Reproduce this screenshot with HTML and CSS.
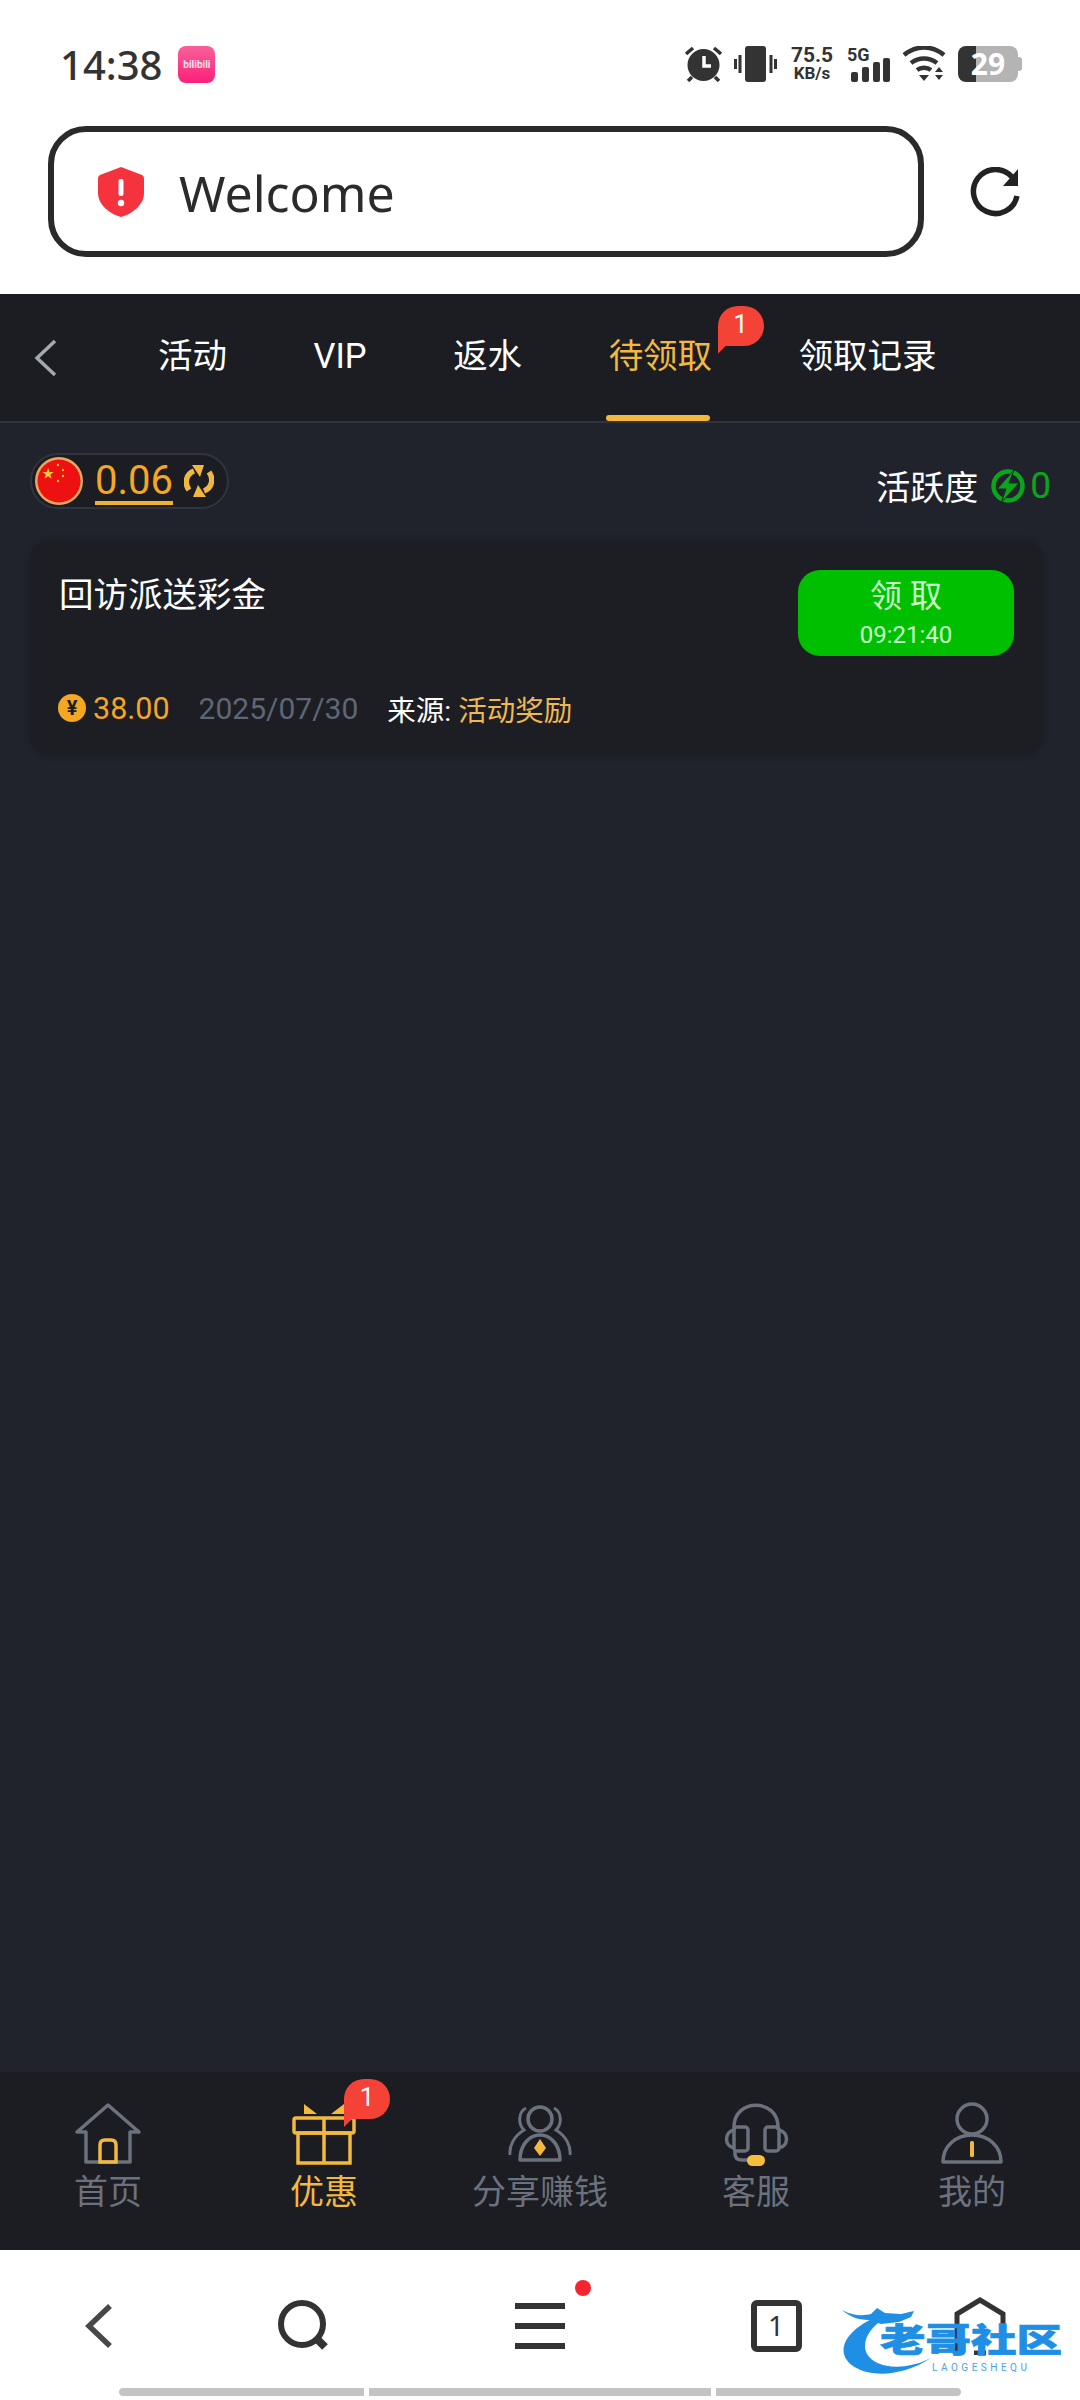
FILE: index.html
```html
<!DOCTYPE html>
<html lang="zh-CN">
<head>
  <meta charset="UTF-8" />
  <meta name="viewport" content="width=device-width, initial-scale=1.0" />
  <title>待领取</title>
  <link rel="stylesheet" href="styles.css">
</head>
<body>
  <div id="tela">

    <div class="status">
      <span class="hora">14:38</span>
      <div class="app-icone"><span>bilibili</span></div>
      <div class="status-dir">
        <svg class="ic-alarme" viewBox="0 0 37 36">
          <circle cx="18.500" cy="19" r="16" fill="#333"/>
          <path d="M19 10v10h7" fill="none" stroke="#fff" stroke-width="3.500"/>
          <path d="M1 8l7-6M36 8l-7-6M7 31l-4 4M30 31l4 4" stroke="#333" stroke-width="3.500" fill="none"/>
        </svg>
        <svg class="ic-vibra" viewBox="0 0 43 36">
          <rect x="11" y="0" width="21" height="36" rx="3" fill="#333"/>
          <path d="M6 9v18M1.500 13v10M37 9v18M41.500 13v10" stroke="#333" stroke-width="3"/>
        </svg>
        <div class="rede"><b>75.5</b><span>KB/s</span></div>
        <div class="sinal">
          <b>5G</b>
          <svg viewBox="0 0 41 24">
            <rect x="2" y="14" width="7" height="10" rx="2" fill="#333"/>
            <rect x="13" y="9" width="7" height="15" rx="2" fill="#333"/>
            <rect x="24" y="4" width="7" height="20" rx="2" fill="#333"/>
            <rect x="34" y="0" width="7" height="24" rx="2" fill="#333"/>
          </svg>
        </div>
        <svg class="ic-wifi" viewBox="0 0 44 36">
          <path d="M2 9C14-1 30-1 42 9M9 17c8-6 18-6 26 0" fill="none" stroke="#333" stroke-width="4.500"/>
          <path d="M15 24c4-3 10-3 14 0" fill="none" stroke="#333" stroke-width="4.500"/>
          <path d="M17 29h10l-5 6zM33 26l4-5 4 5zM33 29h8l-4 5z" fill="#333"/>
        </svg>
        <div class="bateria"><span>29</span></div>
      </div>
    </div>

    <div class="endereco">
      <div class="barra-url">
        <svg class="ic-escudo" viewBox="0 0 46 50">
          <path d="M23 0L44 8Q46 9 46 11V26C46 38 34 47 23 50C12 47 0 38 0 26V11Q0 9 2 8Z" fill="#f4333f"/>
          <rect x="20.500" y="12" width="5" height="17" rx="2" fill="#fff"/>
          <circle cx="23" cy="36" r="3.200" fill="#fff"/>
        </svg>
        <span class="url-texto">Welcome</span>
      </div>
      <svg class="ic-recarregar" viewBox="0 0 50 50">
        <path d="M47 29A22 22 0 1 1 42 10" fill="none" stroke="#222" stroke-width="5.500"/>
        <path d="M48 2V19H33Z" fill="#222"/>
      </svg>
    </div>

    <div class="nav">
      <svg class="ic-voltar" viewBox="0 0 24 38">
        <path d="M21 2L3 19L21 36" fill="none" stroke="#a4a8b0" stroke-width="3.500"/>
      </svg>
      <div class="abas">
        <span class="aba">活动</span>
        <span class="aba">VIP</span>
        <span class="aba">返水</span>
        <span class="aba ativa">待领取<i class="badge badge-aba">1</i></span>
        <span class="aba">领取记录</span>
      </div>
    </div>

    <div class="conteudo">
      <div class="linha-topo">
        <div class="saldo">
          <svg class="ic-bandeira" viewBox="0 0 50 50">
            <circle cx="25" cy="25" r="24" fill="#e8a860"/>
            <circle cx="25" cy="25" r="21.500" fill="#ee1111"/>
            <path d="M14 9l2.200 6.200 6.500.2-5.200 4 1.900 6.300-5.400-3.700-5.400 3.700 1.900-6.300-5.200-4 6.500-.2z" fill="#ffc93a" transform="translate(5 6) scale(.65)"/>
            <circle cx="24" cy="9" r="1.200" fill="#ffc93a"/>
            <circle cx="29" cy="14" r="1.200" fill="#ffc93a"/>
            <circle cx="29" cy="20" r="1.200" fill="#ffc93a"/>
            <circle cx="24" cy="25" r="1.200" fill="#ffc93a"/>
          </svg>
          <span class="saldo-valor">0.06</span>
          <svg class="ic-troca" viewBox="0 0 30 32">
            <path d="M5 25C0 18 2 9 10 6" fill="none" stroke="#f0b840" stroke-width="5.500"/>
            <path d="M8 0h12l-4 12z" fill="#f0b840"/>
            <path d="M25 7c5 7 3 16-5 19" fill="none" stroke="#f0b840" stroke-width="5.500"/>
            <path d="M22 32H9l5-12z" fill="#f0b840"/>
          </svg>
        </div>
        <div class="atividade">
          <span>活跃度</span>
          <svg class="ic-raio" viewBox="0 0 34 34">
            <circle cx="17" cy="17" r="14.500" fill="none" stroke="#0aa61a" stroke-width="4.500"/>
            <path d="M23 1L6 20h9l-5 14 18-20h-10z" fill="#0aa61a" stroke="#20232c" stroke-width="1"/>
          </svg>
          <b>0</b>
        </div>
      </div>

      <div class="cartao">
        <div class="cartao-topo">
          <span class="cartao-titulo">回访派送彩金</span>
          <button class="btn-receber">
            <span class="btn-texto">领 取</span>
            <span class="btn-tempo">09:21:40</span>
          </button>
        </div>
        <div class="cartao-info">
          <span class="moeda">¥</span>
          <span class="valor">38.00</span>
          <span class="data">2025/07/30</span>
          <span class="origem">来源: <em>活动奖励</em></span>
        </div>
      </div>
    </div>

    <div class="menu">
      <div class="menu-item">
        <svg viewBox="0 0 68 64">
          <path d="M12 30H3L34 3L65 30H56V60H12Z" fill="none" stroke="#6b717d" stroke-width="3.500" stroke-linejoin="round"/>
          <path d="M26 60V43Q26 38 31 38H37Q42 38 42 43V60Z" fill="none" stroke="#f3b93f" stroke-width="3.500"/>
        </svg>
        <span>首页</span>
      </div>
      <div class="menu-item ativo">
        <svg viewBox="0 0 68 64">
          <rect x="4" y="16" width="60" height="15" rx="2" fill="none" stroke="#f3b93f" stroke-width="3.500"/>
          <rect x="8" y="31" width="52" height="30" fill="none" stroke="#f3b93f" stroke-width="3.500"/>
          <path d="M34 16V61" stroke="#f3b93f" stroke-width="3.500"/>
          <path d="M14 2L27 12H14ZM54 2L41 12H54Z" fill="#f3b93f"/>
        </svg>
        <i class="badge badge-menu">1</i>
        <span>优惠</span>
      </div>
      <div class="menu-item">
        <svg viewBox="0 0 68 64">
          <circle cx="34" cy="17" r="12" fill="none" stroke="#6b717d" stroke-width="3.500"/>
          <path d="M14 58C14 42 24 33 34 33C44 33 54 42 54 58Z" fill="none" stroke="#6b717d" stroke-width="3.500" stroke-linejoin="round"/>
          <path d="M20 6C12 10 12 22 18 28C8 34 3 44 4 53M48 6C56 10 56 22 50 28C60 34 65 44 64 53" fill="none" stroke="#6b717d" stroke-width="3"/>
          <path d="M34 37l6 9-6 8-6-8z" fill="#f3b93f"/>
        </svg>
        <span>分享赚钱</span>
      </div>
      <div class="menu-item">
        <svg viewBox="0 0 68 64">
          <path d="M12 28V25C12 -4 56 -4 56 25V28" fill="none" stroke="#6b717d" stroke-width="3.500"/>
          <rect x="12" y="25" width="14" height="24" rx="3" fill="none" stroke="#6b717d" stroke-width="3.500"/>
          <rect x="43" y="25" width="14" height="24" rx="3" fill="none" stroke="#6b717d" stroke-width="3.500"/>
          <path d="M12 28C2 30 2 44 12 46M57 28C67 30 67 44 57 46M13 49V52Q13 58 20 58H26" fill="none" stroke="#6b717d" stroke-width="3.500"/>
          <rect x="25" y="53" width="18" height="11" rx="5.500" fill="#f7bd3c"/>
        </svg>
        <span>客服</span>
      </div>
      <div class="menu-item">
        <svg viewBox="0 0 68 64">
          <circle cx="34" cy="17" r="15" fill="none" stroke="#6b717d" stroke-width="3.500"/>
          <path d="M5 60C5 44 18 33 34 33C50 33 63 44 63 60Z" fill="none" stroke="#6b717d" stroke-width="3.500" stroke-linejoin="round"/>
          <rect x="32" y="39" width="4" height="16" rx="1.500" fill="#f3b93f"/>
        </svg>
        <span>我的</span>
      </div>
    </div>

    <div class="navegador">
      <div class="nav-icones">
        <svg class="ic-nav-voltar" viewBox="0 0 32 46">
          <path d="M26 3L5 23L26 43" fill="none" stroke="#484848" stroke-width="5.500"/>
        </svg>
        <svg class="ic-nav-busca" viewBox="0 0 52 52">
          <circle cx="24" cy="24" r="21" fill="none" stroke="#333" stroke-width="6"/>
          <path d="M38 38L47 47" stroke="#333" stroke-width="8"/>
        </svg>
        <div class="nav-menu">
          <svg viewBox="0 0 50 46">
            <path d="M0 3H50M0 23H50M0 43H50" stroke="#333" stroke-width="6"/>
          </svg>
          <i class="ponto"></i>
        </div>
        <div class="nav-abas">1</div>
        <svg class="ic-nav-casa" viewBox="0 0 52 58">
          <path d="M3 56V17L26 3L49 17V56" fill="none" stroke="#333" stroke-width="5"/>
          <path d="M20 56H32" stroke="#333" stroke-width="5"/>
        </svg>
      </div>
      <div class="gestos">
        <span class="gesto g-lado"></span>
        <span class="gesto g-meio"></span>
        <span class="gesto g-lado"></span>
      </div>
      <div class="marca">
        <svg viewBox="0 0 100 80">
          <path d="M38 14C12 24 0 40 3 52C8 72 50 82 90 56C62 70 34 66 26 52C20 40 28 26 44 16Z" fill="#1f8fe6"/>
          <path d="M1 8C12 14 22 14 30 12L36 6L44 11L60 12L73 9L70 15L58 20L40 22L28 18C16 18 8 14 1 8Z" fill="#1f8fe6"/>
        </svg>
        <span class="marca-nome">老哥社区</span>
        <span class="marca-sub">LAOGESHEQU</span>
      </div>
    </div>

  </div>
</body>
</html>
```

FILE: styles.css
```css
* {
  box-sizing: border-box;
}
html, body {
  margin: 0;
  padding: 0;
  background: #fff;
  font-family: Roboto, "Noto Sans CJK SC", sans-serif;
}
svg {
  display: block;
}

#tela {
  width: 1080px;
  height: 2400px;
  display: flex;
  flex-direction: column;
  overflow: hidden;
}

/* barra de status */
.status {
  height: 127px;
  padding: 44px 62px 43px 60px;
  display: flex;
  align-items: center;
  color: #333;
}
.hora {
  font-family: "Noto Sans", sans-serif;
  font-size: 40px;
  font-weight: 500;
}
.app-icone {
  width: 37px;
  height: 37px;
  margin-left: 16px;
  border-radius: 8px;
  background: linear-gradient(#f8619b, #fb1f78);
  color: #ffe3ee;
  font-size: 10px;
  font-weight: 700;
  line-height: 37px;
  text-align: center;
  overflow: hidden;
}
.status-dir {
  margin-left: auto;
  display: flex;
  align-items: center;
  gap: 12px;
}
.ic-alarme { width: 37px; height: 36px; }
.ic-vibra { width: 43px; height: 36px; }
.rede {
  width: 46px;
  display: flex;
  flex-direction: column;
  align-items: center;
  line-height: 18px;
}
.rede b { font-size: 21px; }
.rede span { font-size: 17px; font-weight: 700; }
.sinal {
  width: 43px;
  height: 36px;
  position: relative;
}
.sinal b {
  font-size: 18px;
  line-height: 17px;
  position: absolute;
  top: 0;
  left: 0;
}
.sinal svg {
  position: absolute;
  right: 0;
  bottom: 0;
  width: 41px;
  height: 24px;
}
.ic-wifi { width: 44px; height: 36px; }
.bateria {
  width: 60px;
  height: 36px;
  border-radius: 8px;
  background: linear-gradient(to right, #333 30%, #b4b4b4 30%);
  color: #fff;
  font-family: "Noto Sans", sans-serif;
  font-size: 30px;
  font-weight: 700;
  line-height: 36px;
  text-align: center;
  position: relative;
}
.bateria::after {
  content: "";
  position: absolute;
  right: -4px;
  top: 11px;
  width: 4px;
  height: 14px;
  border-radius: 0 3px 3px 0;
  background: #b4b4b4;
}

/* endereco */
.endereco {
  height: 167px;
  padding: 0 0 38px 48px;
  display: flex;
  align-items: center;
}
.barra-url {
  width: 876px;
  height: 131px;
  border: 6px solid #2a2a2a;
  border-radius: 38px;
  padding-left: 44px;
  display: flex;
  align-items: center;
}
.ic-escudo {
  width: 46px;
  height: 50px;
}
.url-texto {
  margin-left: 35px;
  padding-top: 2px;
  font-family: "Noto Sans", sans-serif;
  font-size: 50px;
  color: #2b2b2b;
}
.ic-recarregar {
  width: 50px;
  height: 50px;
  margin-left: 46px;
}

/* abas */
.nav {
  height: 129px;
  background: #1b1d23;
  border-bottom: 2px solid #30343f;
  padding-left: 34px;
  display: flex;
  align-items: center;
}
.ic-voltar {
  width: 24px;
  height: 38px;
}
.abas {
  height: 100%;
  margin-left: 100px;
  display: flex;
  gap: 86.500px;
}
.aba {
  position: relative;
  font-size: 34.500px;
  line-height: 125px;
  color: #fff;
  white-space: nowrap;
}
.aba.ativa {
  color: #f3b93f;
}
.aba.ativa::after {
  content: "";
  position: absolute;
  left: -3px;
  right: 2px;
  bottom: 0;
  height: 6px;
  border-radius: 3px;
  background: #f3b93f;
}
.badge {
  position: absolute;
  width: 46px;
  height: 40px;
  border-radius: 22px 22px 22px 4px;
  background: #f44336;
  color: #fff;
  font-family: Roboto, sans-serif;
  font-size: 26px;
  font-style: normal;
  line-height: 36px;
  text-align: center;
}
.badge::after {
  content: "";
  position: absolute;
  left: 0;
  bottom: -8px;
  width: 14px;
  height: 14px;
  background: #f44336;
  clip-path: polygon(0 0, 100% 0, 0 100%);
}
.badge-aba {
  left: 109px;
  top: 12px;
}

/* conteudo */
.conteudo {
  flex: 1;
  background: #20232c;
  padding: 30px 37px 0 30px;
}
.linha-topo {
  display: flex;
  justify-content: space-between;
  align-items: flex-start;
}
.saldo {
  width: 199px;
  height: 56px;
  border: 2px solid #30343f;
  border-radius: 28px;
  background: #1b1d23;
  display: flex;
  align-items: center;
  padding-left: 2px;
}
.ic-bandeira {
  width: 50px;
  height: 50px;
}
.saldo-valor {
  margin-left: 11px;
  padding-top: 4px;
  font-size: 40px;
  line-height: 40px;
  color: #f5a623;
  border-bottom: 4px solid #f0b030;
}
.ic-troca {
  width: 30px;
  height: 32px;
  margin-left: 11px;
}
.atividade {
  margin-top: 8px;
  margin-right: -8px;
  display: flex;
  align-items: center;
  color: #fff;
  font-size: 34px;
}
.ic-raio {
  width: 34px;
  height: 34px;
  margin-left: 13px;
}
.atividade b {
  margin-left: 5px;
  font-size: 37px;
  font-weight: 400;
  color: #0aa61a;
}

.cartao {
  margin-top: 31px;
  height: 214px;
  padding: 29px 29px 26px 29px;
  background: #1c1e24;
  border-radius: 18px;
  box-shadow: 0 0 6px #1c1e24;
}
.cartao-topo {
  display: flex;
  justify-content: space-between;
  align-items: flex-start;
}
.cartao-titulo {
  font-size: 34.500px;
  line-height: 50px;
  color: #fff;
}
.btn-receber {
  width: 216px;
  height: 86px;
  padding: 0;
  border: none;
  border-radius: 22px;
  background: #00bf00;
  color: #c9ffc9;
  font-family: inherit;
  display: flex;
  flex-direction: column;
  align-items: center;
}
.btn-texto {
  font-size: 32px;
  line-height: 53px;
}
.btn-tempo {
  font-size: 24px;
  line-height: 24px;
}
.cartao-info {
  margin-top: 32px;
  height: 40px;
  display: flex;
  align-items: center;
  font-size: 30px;
}
.moeda {
  width: 28px;
  height: 28px;
  margin-left: -1px;
  border-radius: 50%;
  background: #f5a623;
  color: #1c1e24;
  font-size: 20px;
  font-weight: 700;
  line-height: 28px;
  text-align: center;
}
.valor {
  margin-left: 7px;
  font-size: 30.500px;
  color: #f5a623;
}
.data {
  margin-left: 29px;
  color: #5f6675;
}
.origem {
  margin-left: 29px;
  font-size: 28.500px;
  color: #fff;
}
.origem em {
  font-style: normal;
  color: #f0b850;
}

/* menu inferior */
.menu {
  height: 178px;
  padding-top: 30px;
  background: #1b1d23;
  display: grid;
  grid-template-columns: repeat(5, 1fr);
}
.menu-item {
  position: relative;
  display: flex;
  flex-direction: column;
  align-items: center;
  gap: 6px;
  color: #6b717d;
  font-size: 34px;
  line-height: 40px;
}
.menu-item svg {
  width: 68px;
  height: 64px;
}
.menu-item.ativo {
  color: #f3b93f;
}
.badge-menu {
  left: 128px;
  top: -23px;
}

/* barra do navegador */
.navegador {
  position: relative;
  height: 150px;
  padding-top: 47px;
  background: #fff;
}
.nav-icones {
  display: grid;
  grid-template-columns: 200px 208px 264px 208px 200px;
  height: 56px;
  align-items: center;
  justify-items: center;
}
.ic-nav-voltar { width: 32px; height: 46px; }
.ic-nav-busca { width: 52px; height: 52px; }
.nav-menu {
  position: relative;
  width: 50px;
  height: 46px;
}
.nav-menu svg {
  width: 50px;
  height: 46px;
}
.ponto {
  position: absolute;
  left: 60px;
  top: -23px;
  width: 16px;
  height: 16px;
  border-radius: 50%;
  background: #f5252f;
}
.nav-abas {
  width: 51px;
  height: 52px;
  border: 6px solid #333;
  border-radius: 6px;
  color: #333;
  font-family: "Noto Sans", sans-serif;
  font-size: 28px;
  line-height: 38px;
  text-align: center;
}
.ic-nav-casa { width: 52px; height: 58px; }
.gestos {
  margin-top: 35px;
  display: flex;
  justify-content: center;
  gap: 5px;
}
.gesto {
  height: 8px;
  background: #c4c4c4;
}
.g-meio { width: 342px; }
.g-lado { width: 245px; border-radius: 4px 0 0 4px; }
.g-lado:last-child { border-radius: 0 4px 4px 0; }

/* marca d'agua por cima da barra */
.marca {
  position: absolute;
  left: 841px;
  top: 52px;
  width: 224px;
  height: 80px;
}
.marca svg {
  width: 100px;
  height: 80px;
}
.marca-nome {
  position: absolute;
  left: 39px;
  top: 14px;
  font-size: 45.500px;
  font-weight: 900;
  line-height: 50px;
  color: #1f8fe6;
  -webkit-text-stroke: 1px #1f8fe6;
  white-space: nowrap;
  transform: scaleY(.72);
}
.marca-sub {
  position: absolute;
  left: 91px;
  top: 60px;
  font-size: 10px;
  line-height: 12px;
  letter-spacing: 3.500px;
  color: #4aa3ea;
  white-space: nowrap;
}
```
